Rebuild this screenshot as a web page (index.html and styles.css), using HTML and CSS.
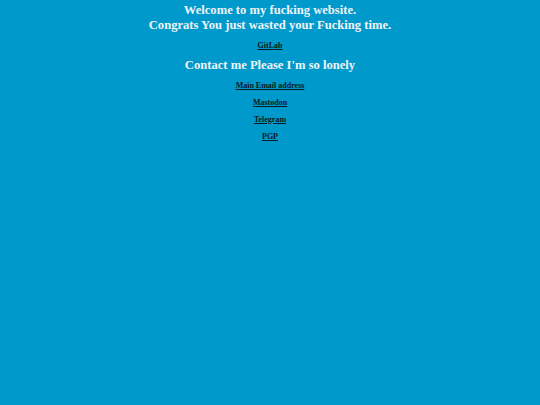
FILE: index.html
```html
<!DOCTYPE html>
<html>
<head>
<meta charset="utf-8">
<link rel="stylesheet" href="styles.css">
<title>Welcome</title>
</head>
<body>
<main class="page">
  <h1 class="title">Welcome to my fucking website.<br>Congrats You just wasted your Fucking time.</h1>
  <a class="link gitlab" href="#">GitLab</a>
  <h2 class="title contact">Contact me Please I'm so lonely</h2>
  <nav class="links">
    <a class="link" href="#">Main Email address</a>
    <a class="link" href="#">Mastodon</a>
    <a class="link" href="#">Telegram</a>
    <a class="link" href="#">PGP</a>
  </nav>
</main>
</body>
</html>
```

FILE: styles.css
```css
html, body {
  margin: 0;
  padding: 0;
  background: #0099cc;
  height: 100%;
}
.page {
  display: flex;
  flex-direction: column;
  align-items: center;
  font-family: "Liberation Serif", "Times New Roman", serif;
  font-weight: bold;
  text-align: center;
}
.title {
  margin: 0;
  color: #f0f4f6;
  font-size: 12.6px;
  line-height: 14.5px;
  padding-top: 3px;
}
.contact {
  margin-top: 8px;
  padding-top: 0;
}
.link {
  display: block;
  color: #0a1a22;
  font-size: 8px;
  line-height: 9px;
}
.gitlab {
  margin-top: 9px;
}
.links {
  display: flex;
  flex-direction: column;
  align-items: center;
  gap: 8px;
  margin-top: 8px;
}
```
